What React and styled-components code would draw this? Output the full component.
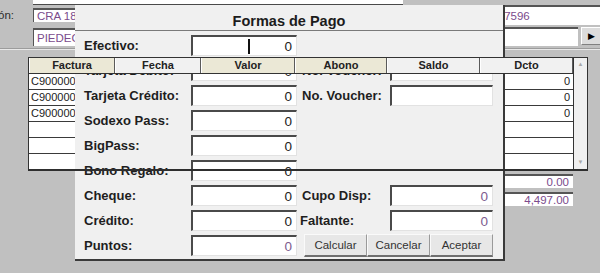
import React from 'react';
import styled, { createGlobalStyle } from 'styled-components';

const GlobalStyle = createGlobalStyle`
  html, body { margin: 0; padding: 0; background: #c0c0c0; }
  body { font-family: "Liberation Sans", Arial, sans-serif; }
`;

const PURPLE = '#7b4b8c';
const COLS = '86px 86px 94px 92px 93px 93px';

const Screen = styled.div`
  position: relative;
  isolation: isolate;
  width: 600px;
  height: 273px;
  overflow: hidden;
  background: #c0c0c0;
`;

const Backdrop = styled.div`
  display: flex;
  flex-direction: column;
`;

const HeadRow = styled.div`
  display: flex;
  align-items: flex-start;
  height: ${p => p.$h}px;
`;

const Caption = styled.div`
  width: 14px;
  margin-right: 19px;
  padding-top: 9px;
  display: flex;
  justify-content: flex-end;
  overflow: hidden;
  white-space: nowrap;
  font-size: 11.5px;
  color: #2c2c2c;
`;

const Stack = styled.div`
  display: flex;
  flex-direction: column;
  width: 370px;
`;

const Remnant = styled.div`
  height: 4px;
  background: #fff;
  border-bottom: 1px solid #4a4a4a;
`;

const Field = styled.div`
  box-sizing: border-box;
  display: flex;
  align-items: center;
  justify-content: ${p => (p.$right ? 'flex-end' : 'flex-start')};
  width: ${p => (p.$w ? `${p.$w}px` : 'auto')};
  flex: ${p => (p.$w ? 'none' : '1')};
  height: ${p => p.$h || 19}px;
  margin: ${p => p.$m || '0'};
  padding: 0 4px 0 3px;
  background: #fff;
  border-top: 2px solid #555;
  border-left: 1px solid #555;
  font-size: 11.5px;
  color: ${PURPLE};
  white-space: nowrap;
  overflow: hidden;
`;

const NavButton = styled.div`
  box-sizing: border-box;
  width: 19px;
  height: 18px;
  margin: 1px 0 0 3px;
  background: #dcdcdc;
  border-top: 1px solid #fff;
  border-left: 1px solid #fff;
  border-bottom: 1px solid #808080;
  display: flex;
  align-items: center;
  justify-content: center;
  font-size: 9px;
  color: #000;
`;

const Separator = styled.div`
  margin-top: 1px;
  height: 1px;
  background: #9c9c9c;
  border-bottom: 1px solid #e8e8e8;
`;

const Grid = styled.div`
  margin: 7px 0 0 28px;
  width: 560px;
  display: flex;
  flex-direction: column;
`;

const GridMain = styled.div`
  display: flex;
`;

const Table = styled.div`
  width: 545px;
  box-sizing: border-box;
  border-left: 1px solid #333;
`;

const HeaderRow = styled.div`
  position: relative;
  z-index: 2;
  display: grid;
  grid-template-columns: ${COLS};
  border-top: 1px solid #333;
  border-bottom: 1px solid #333;
`;

const HeaderCell = styled.div`
  box-sizing: border-box;
  height: 15px;
  line-height: 15px;
  text-align: center;
  font-size: 11px;
  font-weight: bold;
  color: #222;
  background: ${p => (p.$beige ? '#ebe8d6' : '#f1f1f1')};
  border-left: 1px solid #fff;
  border-right: 1px solid #5a5a5a;
`;

const BodyRow = styled.div`
  display: grid;
  grid-template-columns: ${COLS};
  height: ${p => (p.$last ? 15 : 16)}px;
  box-sizing: border-box;
  background: #fff;
  border-bottom: ${p => (p.$last ? 'none' : '1px solid #3a3a3a')};
`;

const Cell = styled.div`
  font-size: 11px;
  line-height: 15px;
  color: #222;
  padding: 0 3px 0 2px;
  text-align: ${p => (p.$right ? 'right' : 'left')};
  overflow: hidden;
  white-space: nowrap;
`;

const Scrollbar = styled.div`
  width: 15px;
  box-sizing: border-box;
  background: #f0f0f0;
  border-left: 1px solid #333;
  border-right: 1px solid #333;
  border-top: 1px solid #333;
  display: flex;
  flex-direction: column;
  justify-content: space-between;
  align-items: center;
  font-size: 6px;
  color: #a8a8a8;
  padding: 3px 0 4px;
`;

const BottomRule = styled.div`
  position: relative;
  z-index: 2;
  height: 2px;
  background: #2e2e2e;
`;

const Totals = styled.div`
  margin: 3px 0 0 440px;
  width: 133px;
  display: flex;
  flex-direction: column;
  gap: 4px;
`;

const Dialog = styled.section`
  position: absolute;
  z-index: 1;
  left: 75px;
  top: 5px;
  width: 430px;
  height: 256px;
  box-sizing: border-box;
  background: #f0f0f0;
  border-right: 2px solid #3a3a3a;
  border-bottom: 2px solid #3a3a3a;
  display: flex;
  flex-direction: column;
`;

const TitleBar = styled.div`
  height: 26px;
  box-sizing: border-box;
  padding-top: 8px;
  border-bottom: 1px solid #7a7a7a;
  text-align: center;
  font-size: 14.5px;
  line-height: 17px;
  font-weight: bold;
  color: #1c1c1c;
`;

const Form = styled.div`
  display: grid;
  grid-template-columns: 107px 106px 93px 103px;
  grid-auto-rows: 25px;
  align-items: center;
  padding: 2px 0 0 9px;
`;

const Label = styled.div`
  font-size: 13px;
  font-weight: bold;
  color: #1e1e1e;
  white-space: nowrap;
  padding-left: ${p => p.$indent || 0}px;
  grid-column: ${p => p.$col || 'auto'};
`;

const Amount = styled.div`
  position: relative;
  box-sizing: border-box;
  height: 21px;
  display: flex;
  align-items: center;
  justify-content: flex-end;
  padding-right: 4px;
  background: #fff;
  border-top: 2px solid #4a4a4a;
  border-left: 2px solid #4a4a4a;
  border-right: 1px solid #e2e2e2;
  border-bottom: 1px solid #e2e2e2;
  font-size: 13.5px;
  color: ${p => (p.$muted ? '#7d5c8f' : '#222')};
  grid-column: ${p => p.$col || 'auto'};
`;

const Caret = styled.span`
  position: absolute;
  left: 55px;
  top: 2px;
  width: 2px;
  height: 15px;
  background: #111;
`;

const ButtonBar = styled.div`
  grid-column: 3 / 5;
  display: flex;
  margin-left: 7px;
  height: 23px;
`;

const Button = styled.div`
  flex: 1;
  box-sizing: border-box;
  display: flex;
  align-items: center;
  justify-content: center;
  background: #e7e7e7;
  border-top: 1px solid #fafafa;
  border-left: 1px solid #fafafa;
  border-right: 1px solid #9a9a9a;
  border-bottom: 2px solid #6e6e6e;
  font-size: 11.5px;
  color: #333;
`;

const headers = [
  ['Factura', true],
  ['Fecha', false],
  ['Valor', true],
  ['Abono', true],
  ['Saldo', false],
  ['Dcto', false],
];

const rows = [
  { factura: 'C900000', dcto: '0' },
  { factura: 'C900000', dcto: '0' },
  { factura: 'C900000', dcto: '0' },
  {},
  {},
  {},
];

export default function App() {
  return (
    <>
      <GlobalStyle />
      <Screen>
        <Backdrop>
          <HeadRow $h={26}>
            <Caption>Dirección:</Caption>
            <Stack>
              <Remnant />
              <Field $h={18} $m="3px 0 0 0">CRA 18 # 45-30</Field>
            </Stack>
            <Field $m="5px 0 0 78px" $h={20}>3017596</Field>
          </HeadRow>
          <HeadRow $h={21}>
            <Field $w={370} $h={18} $m="2px 0 0 33px">PIEDECUESTA</Field>
            <Field $w={97} $h={19} $m="1px 0 0 78px" />
            <NavButton>▶</NavButton>
          </HeadRow>
          <Separator />

          <Grid>
            <GridMain>
              <Table>
                <HeaderRow>
                  {headers.map(([h, beige]) => (
                    <HeaderCell key={h} $beige={beige}>{h}</HeaderCell>
                  ))}
                </HeaderRow>
                {rows.map((r, i) => (
                  <BodyRow key={i} $last={i === rows.length - 1}>
                    <Cell>{r.factura}</Cell>
                    <Cell />
                    <Cell />
                    <Cell />
                    <Cell />
                    <Cell $right>{r.dcto}</Cell>
                  </BodyRow>
                ))}
              </Table>
              <Scrollbar>
                <span>▲</span>
                <span>▼</span>
              </Scrollbar>
            </GridMain>
            <BottomRule />
          </Grid>

          <Totals>
            <Field $right $h={16}>0.00</Field>
            <Field $right $h={16}>4,497.00</Field>
          </Totals>
        </Backdrop>

        <Dialog>
          <TitleBar>Formas de Pago</TitleBar>
          <Form>
            <Label>Efectivo:</Label>
            <Amount $col="2">
              <Caret />0
            </Amount>

            <Label $col="1">Tarjeta Débito:</Label>
            <Amount>0</Amount>
            <Label $indent={5}>No. Voucher:</Label>
            <Amount />

            <Label>Tarjeta Crédito:</Label>
            <Amount>0</Amount>
            <Label $indent={5}>No. Voucher:</Label>
            <Amount />

            <Label>Sodexo Pass:</Label>
            <Amount $col="2">0</Amount>

            <Label $col="1">BigPass:</Label>
            <Amount $col="2">0</Amount>

            <Label $col="1">Bono Regalo:</Label>
            <Amount $col="2">0</Amount>

            <Label $col="1">Cheque:</Label>
            <Amount>0</Amount>
            <Label $indent={5}>Cupo Disp:</Label>
            <Amount $muted>0</Amount>

            <Label>Crédito:</Label>
            <Amount>0</Amount>
            <Label $indent={3}>Faltante:</Label>
            <Amount $muted>0</Amount>

            <Label>Puntos:</Label>
            <Amount $muted>0</Amount>
            <ButtonBar>
              <Button>Calcular</Button>
              <Button>Cancelar</Button>
              <Button>Aceptar</Button>
            </ButtonBar>
          </Form>
        </Dialog>
      </Screen>
    </>
  );
}
